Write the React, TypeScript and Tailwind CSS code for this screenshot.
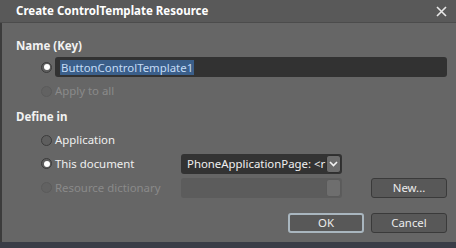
import React from "react";

function Radio({ checked, disabled }: { checked?: boolean; disabled?: boolean }) {
  return (
    <span
      className={
        "flex h-[11px] w-[11px] shrink-0 items-center justify-center rounded-full border " +
        (disabled ? "border-[#5b5b5b] bg-[#626262]" : "border-[#3c3c3c] bg-[#5e5e5e]")
      }
    >
      {checked && <span className="h-[6px] w-[6px] rounded-full bg-white" />}
    </span>
  );
}

function RadioLabel({ label, checked, disabled }: { label: string; checked?: boolean; disabled?: boolean }) {
  return (
    <div className="flex w-[179px] shrink-0 items-center gap-[3px] pl-[39px]">
      <Radio checked={checked} disabled={disabled} />
      <span className={disabled ? "text-[#8a8a8a]" : "text-[#f0f0f0]"}>{label}</span>
    </div>
  );
}

function Btn({ label, focused }: { label: string; focused?: boolean }) {
  return (
    <div
      className={
        "flex h-[20px] w-[76px] items-center justify-center rounded-[3px] bg-[#585858] text-[#ececec] " +
        (focused ? "border-2 border-[#a9b6bf]" : "border border-[#3a3a3a]")
      }
    >
      {label}
    </div>
  );
}

export default function App() {
  return (
    <div
      className="flex h-[248px] w-[456px] flex-col overflow-hidden bg-[#666666] text-[11.4px]"
      style={{ fontFamily: "'Noto Sans', 'Open Sans', sans-serif" }}
    >
      {/* title bar */}
      <div className="flex h-[23px] shrink-0 items-center justify-between border-b border-[#4c4c4c] bg-[#595959] pl-[16px] pr-[8px]">
        <span className="text-[11.5px] font-bold text-white">Create ControlTemplate Resource</span>
        <svg width="11" height="11" viewBox="0 0 11 11" className="mr-[1px]">
          <path d="M1 1 L10 10 M10 1 L1 10" stroke="#e8e8e8" strokeWidth="1.6" />
        </svg>
      </div>

      <div className="flex flex-1 flex-col border-l-2 border-[#3c3c3c] pt-[13px]">
        <div className="flex h-5 items-center pl-[14px] text-[11.5px] font-bold text-[#f2f2f2]">Name (Key)</div>

        <div className="mt-[1px] flex h-[20px] items-center pl-[39px] pr-[9px]">
          <Radio checked />
          <div className="ml-[3px] flex h-[20px] flex-1 items-center rounded-[3px] bg-[#323232] pl-[5px]">
            <span className="bg-[#3b5f8a] px-[1px] leading-[15px] text-[#c4dcf6]">ButtonControlTemplate1</span>
          </div>
        </div>

        <div className="mt-[2px] flex h-6">
          <RadioLabel label="Apply to all" disabled />
        </div>

        <div className="mt-[4px] flex h-5 items-center pl-[14px] text-[11.5px] font-bold text-[#f2f2f2]">Define in</div>

        <div className="mt-[1px] flex h-6">
          <RadioLabel label="Application" />
        </div>

        <div className="flex h-6 items-center">
          <RadioLabel label="This document" checked />
          <div className="flex h-[20px] w-[161px] items-center rounded-[3px] bg-[#333333] pl-[6px] pr-[1px]">
            <span className="flex-1 overflow-hidden whitespace-nowrap text-[#f0f0f0]">PhoneApplicationPage: &lt;r</span>
            <span className="flex h-[18px] w-[15px] shrink-0 items-center justify-center rounded-[3px] border border-[#2e2e2e] bg-[#6c6c6c]">
              <svg width="9" height="6" viewBox="0 0 9 6">
                <path d="M1 1 L4.5 4.5 L8 1" stroke="#f2f2f2" strokeWidth="1.6" fill="none" />
              </svg>
            </span>
          </div>
        </div>

        <div className="flex h-6 items-center pr-[9px]">
          <RadioLabel label="Resource dictionary" disabled />
          <div className="flex h-[20px] w-[161px] items-center justify-end rounded-[3px] bg-[#5c5c5c] pr-[1px]">
            <span className="h-[18px] w-[15px] rounded-[3px] border border-[#5a5a5a] bg-[#6e6e6e]" />
          </div>
          <div className="ml-auto">
            <Btn label="New..." />
          </div>
        </div>

        <div className="mt-[13px] flex justify-end gap-[7px] pr-[9px]">
          <Btn label="OK" focused />
          <Btn label="Cancel" />
        </div>
      </div>
      <div className="h-[6px] shrink-0 bg-[#3a3d47]" />
    </div>
  );
}
